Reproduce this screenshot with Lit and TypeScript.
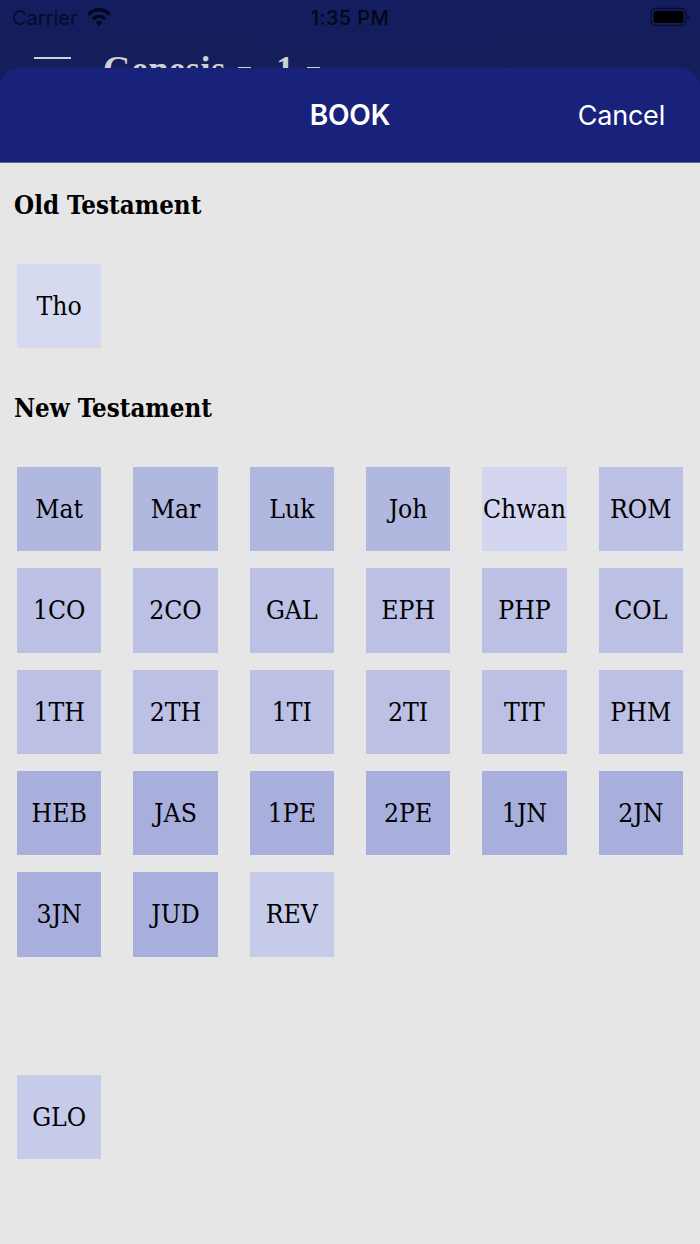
import { LitElement, html, css } from "lit";
import { customElement } from "lit/decorators.js";

type Tone = "tho" | "gos" | "chw" | "epi" | "gen" | "end";
const tho: [string, Tone][] = [["Tho", "tho"]];
const nt: [string, Tone][] = [
  ["Mat", "gos"], ["Mar", "gos"], ["Luk", "gos"], ["Joh", "gos"], ["Chwan", "chw"], ["ROM", "epi"],
  ["1CO", "epi"], ["2CO", "epi"], ["GAL", "epi"], ["EPH", "epi"], ["PHP", "epi"], ["COL", "epi"],
  ["1TH", "epi"], ["2TH", "epi"], ["1TI", "epi"], ["2TI", "epi"], ["TIT", "epi"], ["PHM", "epi"],
  ["HEB", "gen"], ["JAS", "gen"], ["1PE", "gen"], ["2PE", "gen"], ["1JN", "gen"], ["2JN", "gen"],
  ["3JN", "gen"], ["JUD", "gen"], ["REV", "end"],
];
const extra: [string, Tone][] = [["GLO", "end"]];

@customElement("app-root")
export class AppRoot extends LitElement {
  static styles = css`
    :host { display: block; width: 700px; height: 1244px; position: relative; overflow: hidden; background: #141e5c; font-family: "DejaVu Serif", "Liberation Serif", serif; }
    .backdrop { height: 68px; background: linear-gradient(#141d5e, #151f5a); overflow: hidden; }
    .status { height: 36px; display: flex; align-items: center; justify-content: space-between; padding: 0 10px 0 12px; font-family: "Inter", "Liberation Sans", sans-serif; font-size: 20px; color: #04061a; position: relative; }
    .left { display: flex; align-items: center; gap: 9px; color: #060a2c; }
    .left svg { display: block; margin-top: -2px; }
    .batt { display: block; margin-top: -2px; }
    .time { position: absolute; left: 0; right: 0; text-align: center; font-weight: 500; letter-spacing: 0.4px; color: #04061a; }
    .nav { display: flex; align-items: flex-start; padding: 21px 0 0 34px; gap: 32px; }
    .burger { width: 37px; height: 2px; background: #cfd0d8; }
    .title { font-size: 36px; font-weight: 700; color: #cfd0d4; line-height: 24px; font-family: "Liberation Serif", serif; white-space: nowrap; letter-spacing: 0.7px; display: flex; align-items: flex-start; }
    .title span { display: block; }
    .caret { width: 13px; height: 2px; background: #cfd0d4; margin: 10px 0 0 12px; }
    .one { margin-left: 25px; }
    .sheet { position: absolute; left: 0; right: 0; top: 68px; bottom: 0; border-radius: 20px 20px 0 0; overflow: hidden; background: #19227b; display: flex; flex-direction: column; }
    header { flex: none; height: 94px; background: #19227b; border-bottom: 1px solid #5a60a0; display: flex; align-items: center; justify-content: center; position: relative; font-family: "Inter", "Liberation Sans", sans-serif; color: #fff; }
    .head { font-size: 28px; font-weight: 600; letter-spacing: -0.2px; }
    .cancel { position: absolute; right: 35px; top: 50%; transform: translateY(-50%); font-size: 27px; font-weight: 400; letter-spacing: -0.2px; }
    main { flex: 1; background: #e6e6e6; }
    h2 { margin: 0; padding-left: 14px; font-size: 25.7px; font-stretch: condensed; line-height: 32px; font-weight: 700; color: #000; }
    h2.ot { padding-top: 26px; }
    .grid { display: grid; grid-template-columns: repeat(6, 84.4px); justify-content: space-between; row-gap: 16.9px; padding: 0 17px; }
    .g1 { margin-top: 43px; }
    .nt { margin-top: 43.6px; }
    .g2 { margin-top: 43px; }
    .g3 { margin-top: 118px; }
    .cell { height: 84.4px; display: flex; align-items: center; justify-content: center; font-size: 26.3px; font-stretch: condensed; color: #000; white-space: nowrap; }
    .tho { background: #d6daf0; }
    .gos { background: #b0b8e0; }
    .chw { background: #d4d5f0; }
    .epi { background: #bbc0e4; }
    .gen { background: #a8afdd; }
    .end { background: #c6cbe9; }
  `;

  private cells(items: [string, Tone][]) {
    return items.map(([label, tone]) => html`<div class="cell ${tone}">${label}</div>`);
  }

  render() {
    return html`
      <div class="backdrop">
        <div class="status">
          <div class="left">Carrier
            <svg width="24" height="18" viewBox="1 3 24 16.300" preserveAspectRatio="none"><path fill="#04061a" d="M13 3C8.400 3 4.300 4.800 1.200 7.700L3.300 10C5.800 7.600 9.200 6.200 13 6.200S20.200 7.600 22.700 10L24.800 7.700C21.700 4.800 17.600 3 13 3ZM13 9C10.300 9 7.800 10 5.900 11.800L8 14.100C9.300 12.900 11.100 12.100 13 12.100S16.700 12.900 18 14.100L20.100 11.800C18.200 10 15.700 9 13 9ZM13 14.800C11.800 14.800 10.700 15.200 9.900 16L13 19.300L16.100 16C15.300 15.200 14.200 14.800 13 14.800Z"/></svg>
          </div>
          <div class="time">1:35 PM</div>
          <svg class="batt" width="40" height="20" viewBox="0 0 40 20"><rect x="1" y="1.500" width="35" height="17" rx="4.500" fill="none" stroke="#0a0e30" stroke-width="1.500"/><rect x="3.500" y="4" width="30" height="12" rx="2.500" fill="#000"/><path d="M37.500 7.500v5c1 -.4 1.800 -1.400 1.800 -2.500s-.8 -2.100 -1.800 -2.500Z" fill="#0a0e30"/></svg>
        </div>
        <div class="nav">
          <div class="burger"></div>
          <div class="title"><span>Genesis</span><span class="caret"></span><span class="one">1</span><span class="caret"></span></div>
        </div>
      </div>
      <div class="sheet">
        <header>
          <div class="head">BOOK</div>
          <div class="cancel">Cancel</div>
        </header>
        <main>
          <h2 class="ot">Old Testament</h2>
          <div class="grid g1">${this.cells(tho)}</div>
          <h2 class="nt">New Testament</h2>
          <div class="grid g2">${this.cells(nt)}</div>
          <div class="grid g3">${this.cells(extra)}</div>
        </main>
      </div>
    `;
  }
}
